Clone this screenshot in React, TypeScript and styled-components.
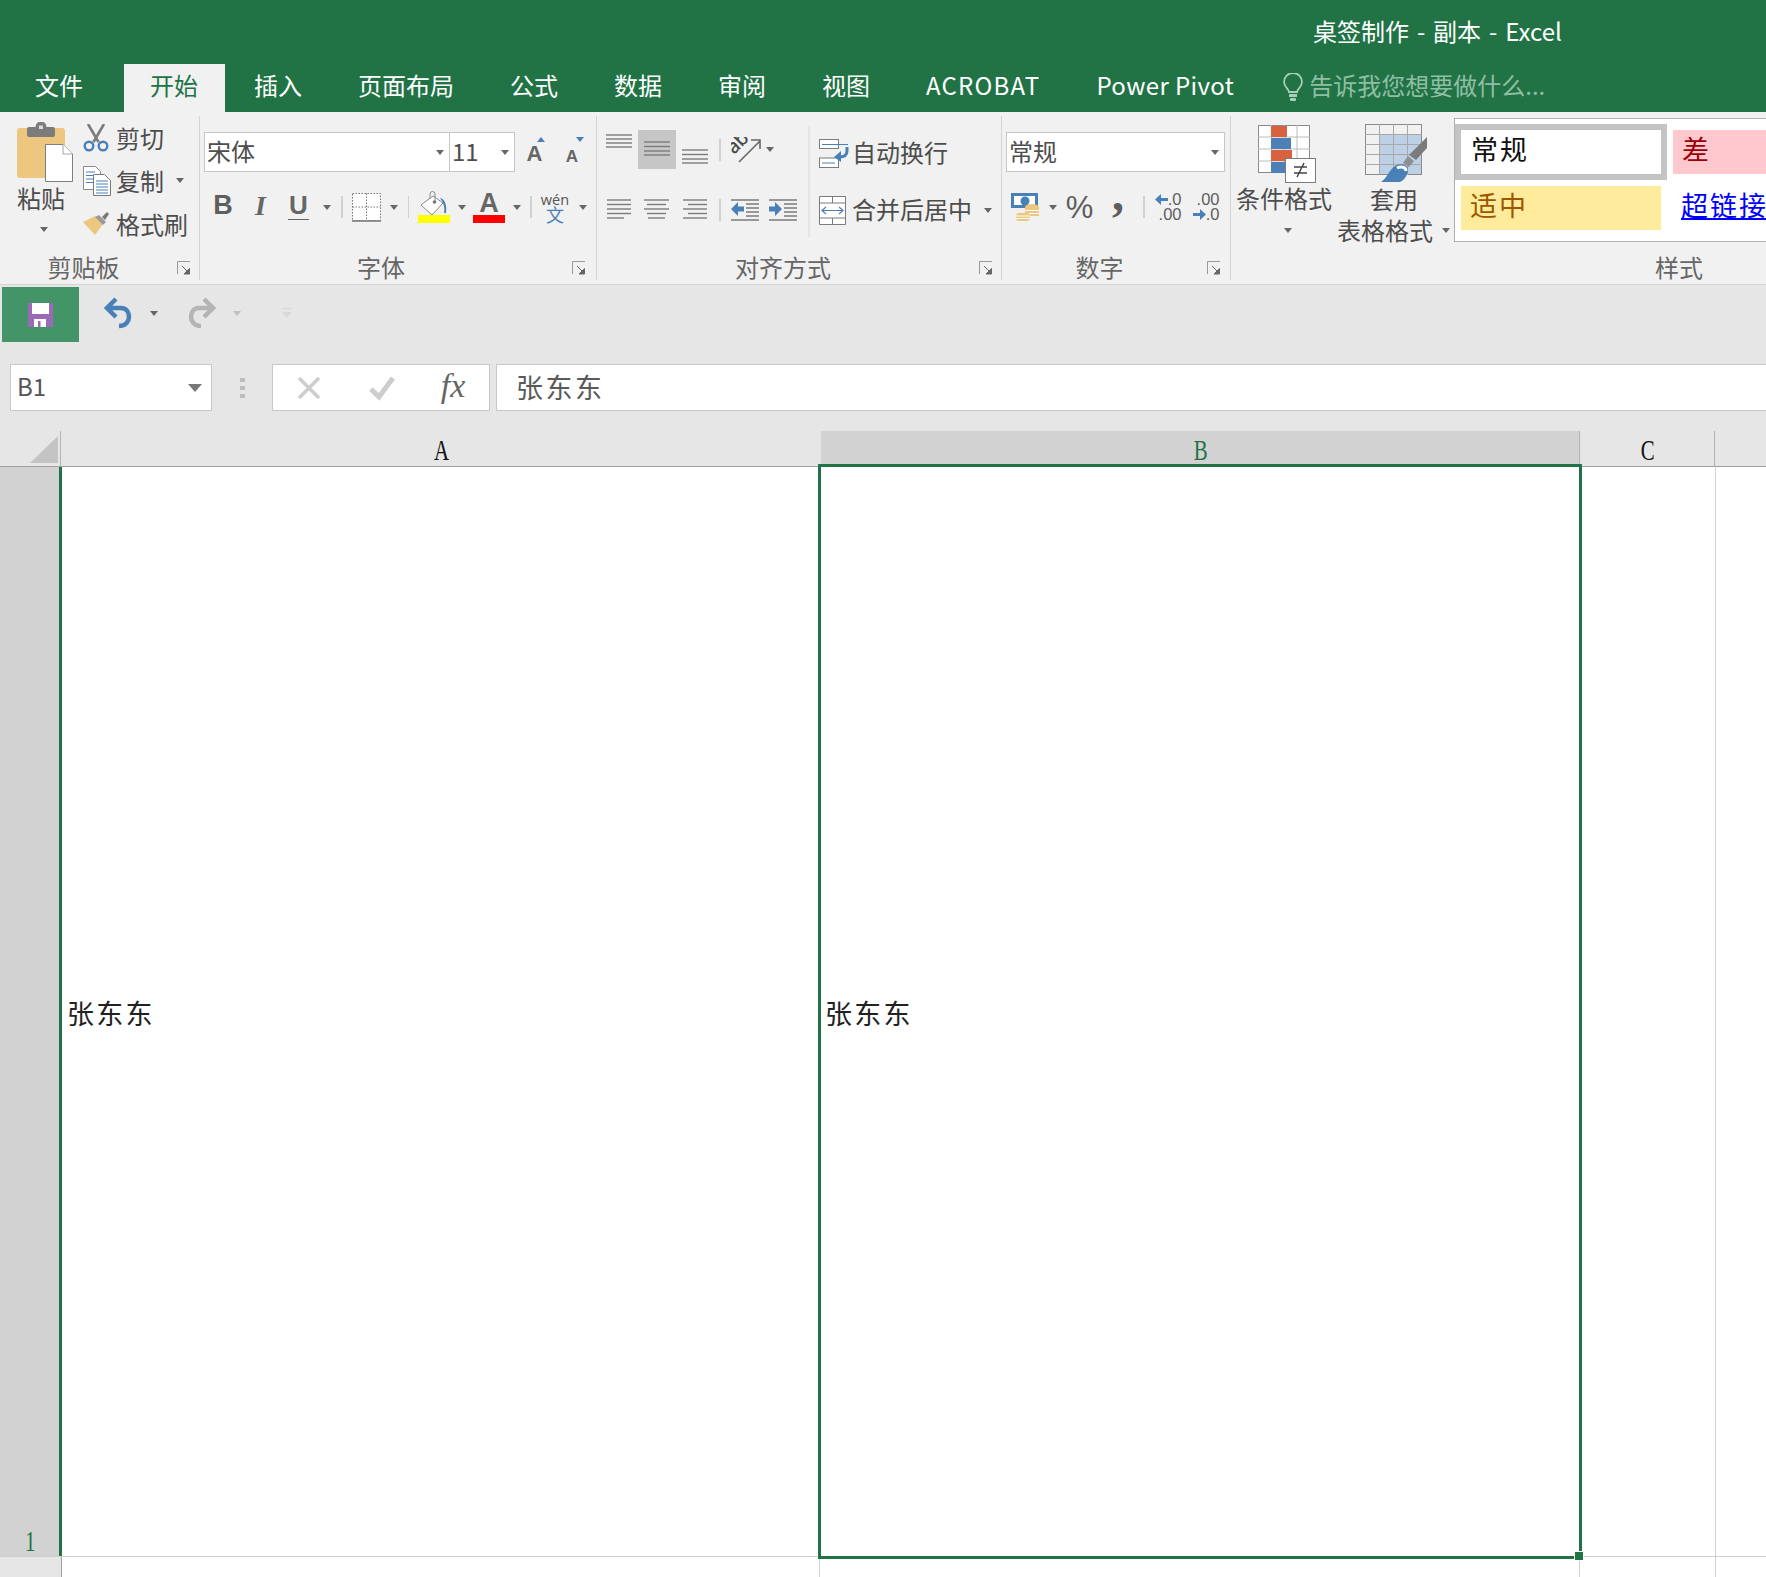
import React from "react";
import styled, { createGlobalStyle } from "styled-components";

const CJK = `"Noto Sans CJK SC", "Noto Sans", sans-serif`;
const GREEN = "#217346";
const GREY = "#7b7b7b";
const BLUE = "#4a80b8";
const GOLD = "#edc77f";

const Global = createGlobalStyle`
  html, body { margin: 0; padding: 0; background: #fff; }
  body { font-family: ${CJK}; }
`;

const Page = styled.div`
  width: 1766px;
  height: 1577px;
  overflow: hidden;
  display: flex;
  flex-direction: column;
  background: #e6e6e6;
  position: relative;
`;

/* ---------- title + tabs ---------- */
const TitleBar = styled.div`
  height: 64px;
  box-sizing: border-box;
  background: ${GREEN};
  color: #fff;
  font-size: 24px;
  line-height: 1;
  display: flex;
  align-items: center;
  padding: 0 0 3px 1313px;
  word-spacing: 2.5px;
  white-space: pre;
`;
const TabRow = styled.div`
  height: 48px;
  background: ${GREEN};
  display: flex;
  gap: 2px;
`;
const Tab = styled.div<{ $active?: boolean; $pl?: number; $pr?: number; $ls?: number }>`
  height: 48px;
  box-sizing: border-box;
  padding: 0 ${(p) => p.$pr ?? 27}px 7px ${(p) => p.$pl ?? 27}px;
  display: flex;
  align-items: center;
  font-size: 24px;
  letter-spacing: ${(p) => p.$ls ?? 0}px;
  white-space: pre;
  color: ${(p) => (p.$active ? GREEN : "#fff")};
  background: ${(p) => (p.$active ? "#f1f1f1" : "transparent")};
`;
const Hint = styled.div`
  display: flex;
  align-items: center;
  gap: 6px;
  margin-left: 20px;
  font-size: 24px;
  color: #8fbfa3;
  white-space: pre;
  padding-bottom: 2px;
`;
const HintText = styled.span`
  padding-bottom: 5px;
`;

/* ---------- ribbon ---------- */
const Ribbon = styled.div`
  height: 173px;
  box-sizing: border-box;
  background: #f1f1f1;
  border-bottom: 1px solid #d4d4d4;
  padding-top: 4px;
  display: flex;
  flex: none;
`;
const Group = styled.div<{ $w: number; $flat?: boolean }>`
  width: ${(p) => p.$w}px;
  flex: none;
  height: 164px;
  box-sizing: border-box;
  border-right: ${(p) => (p.$flat ? "none" : "1.5px solid #d4d4d4")};
  display: flex;
  flex-direction: column;
`;
const Content = styled.div<{ $col?: boolean; $pl?: number }>`
  height: 140px;
  flex: none;
  display: flex;
  flex-direction: ${(p) => (p.$col ? "column" : "row")};
  padding-left: ${(p) => p.$pl ?? 0}px;
`;
const LabelRow = styled.div<{ $pr?: number }>`
  height: 24px;
  display: flex;
  align-items: center;
  padding-right: ${(p) => p.$pr ?? 8}px;
`;
const Label = styled.div<{ $pr?: number }>`
  flex: 1;
  text-align: center;
  font-size: 24px;
  line-height: 24px;
  color: #666;
  box-sizing: border-box;
  padding: 0 ${(p) => p.$pr ?? 10}px 3px 0;
`;
const Launcher = () => (
  <svg width="14" height="14" viewBox="0 0 14 14">
    <path d="M.5 13V.5H13" fill="none" stroke="#9a9a9a" />
    <path d="M5 5l6 6M12.5 7.5v5.5H7z" stroke="#666" fill="#666" strokeWidth="1" />
  </svg>
);
const Caret = styled.span<{ $c?: string; $up?: boolean }>`
  display: block;
  width: 0;
  height: 0;
  border-left: 4.5px solid transparent;
  border-right: 4.5px solid transparent;
  ${(p) =>
    p.$up
      ? `border-bottom: 5px solid ${p.$c ?? "#666"};`
      : `border-top: 5px solid ${p.$c ?? "#666"};`}
`;
const Tool = styled.div<{ $w: number; $ml?: number; $on?: boolean }>`
  width: ${(p) => p.$w}px;
  margin-left: ${(p) => p.$ml ?? 0}px;
  flex: none;
  height: 100%;
  display: flex;
  flex-direction: column;
  align-items: center;
  justify-content: center;
  background: ${(p) => (p.$on ? "#c6c6c6" : "transparent")};
`;
const Sep = styled.div<{ $h: number; $ml: number }>`
  width: 1.5px;
  height: ${(p) => p.$h}px;
  margin-left: ${(p) => p.$ml}px;
  background: #d0d0d0;
  flex: none;
  align-self: center;
`;
const Row = styled.div<{ $h: number; $mt: number }>`
  height: ${(p) => p.$h}px;
  margin-top: ${(p) => p.$mt}px;
  display: flex;
  align-items: center;
  flex: none;
`;
const LeftBlock = styled.div`
  width: 211px;
  flex: none;
`;
const Text = styled.span<{ $ml?: number }>`
  font-size: 24px;
  line-height: 24px;
  color: #4d4d4d;
  white-space: pre;
  margin-left: ${(p) => p.$ml ?? 0}px;
`;
const LiftText = styled(Text)`
  padding-bottom: 4px;
`;
const Combo = styled.div<{ $w: number; $ml?: number }>`
  width: ${(p) => p.$w}px;
  height: 40px;
  margin-left: ${(p) => p.$ml ?? 0}px;
  box-sizing: border-box;
  background: #fff;
  border: 1.5px solid #c6c6c6;
  display: flex;
  align-items: center;
  justify-content: space-between;
  padding: 0 5px 0 2px;
  font-size: 24px;
  color: #4d4d4d;
  flex: none;
`;
const ComboText = styled.span`
  padding-bottom: 4px;
`;

/* clipboard */
const PasteCol = styled.div`
  width: 56px;
  flex: none;
  padding-top: 6px;
  display: flex;
  flex-direction: column;
`;
const PasteText = styled(Text)`
  margin-top: 4px;
`;
const PasteCaret = styled.div`
  margin: 17px 0 0 23px;
`;
const ClipCol = styled.div`
  margin-left: 10px;
  padding-top: 2px;
  display: flex;
  flex-direction: column;
`;
const ClipRow = styled.div`
  height: 43px;
  box-sizing: border-box;
  padding-bottom: 4px;
  display: flex;
  align-items: center;
`;
const ClipIcon = styled.div`
  width: 33px;
  flex: none;
  display: flex;
`;

/* glyph-like tool text */
const Bold = styled.span`
  font: bold 27px/1 "Liberation Sans", sans-serif;
  color: #5e5e5e;
  padding-bottom: 3px;
`;
const Ital = styled.span`
  font: italic bold 28px/1 "Liberation Serif", serif;
  color: #666;
  padding-bottom: 3px;
`;
const Under = styled.span`
  font: bold 26px/1 "Liberation Sans", sans-serif;
  color: #666;
  border-bottom: 1.5px solid #666;
  padding: 0 1px 1px;
  margin-bottom: 3px;
`;
const BigA = styled.span<{ $s: number }>`
  font: bold ${(p) => p.$s}px/${(p) => Math.min(p.$s, 24)}px "Liberation Sans", sans-serif;
  color: #666;
`;
const StepBtn = styled.div<{ $pb: number }>`
  display: flex;
  align-items: flex-end;
  height: 32px;
  box-sizing: border-box;
  padding-bottom: ${(p) => p.$pb}px;
`;
const StepCaret = styled.div<{ $ml: number }>`
  align-self: flex-start;
  margin: 1px 0 0 ${(p) => p.$ml}px;
`;
const ColorBar = styled.div<{ $c: string }>`
  width: 32px;
  height: 8px;
  background: ${(p) => p.$c};
  flex: none;
`;
const WenTop = styled.span`
  font: 14.5px/9px "Open Sans", sans-serif;
  color: #555;
  padding-top: 3px;
`;
const WenBottom = styled.span`
  font: 18px/18px ${CJK};
  color: ${BLUE};
  margin-top: 1px;
`;
const Pct = styled.span`
  font: 31px/1 "Liberation Sans", sans-serif;
  color: #5e5e5e;
`;
const Comma = styled.span`
  font: bold 48px/46px "Liberation Serif", serif;
  color: #5e5e5e;
  height: 46px;
  margin-top: -27px;
`;
const DecBox = styled.div`
  width: 28px;
  display: flex;
  flex-direction: column;
  align-items: flex-end;
  font: 16.5px/15px "Liberation Sans", sans-serif;
  color: #5e5e5e;
`;
const DecLine = styled.div`
  display: flex;
  align-items: center;
  gap: 0;
  white-space: pre;
`;

/* styles */
const BigCol = styled.div<{ $w: number; $ml: number }>`
  width: ${(p) => p.$w}px;
  margin-left: ${(p) => p.$ml}px;
  flex: none;
  display: flex;
  flex-direction: column;
`;
const BigIcon = styled.div<{ $ml: number; $mt: number }>`
  margin: ${(p) => p.$mt}px 0 0 ${(p) => p.$ml}px;
  height: 58px;
  display: flex;
`;
const BigLine = styled.div<{ $ml?: number; $mt: number }>`
  margin: ${(p) => p.$mt}px 0 0 ${(p) => p.$ml ?? 0}px;
  display: flex;
  align-items: center;
  height: 24px;
`;
const Gallery = styled.div`
  margin: 2px 0 0 4px;
  height: 124px;
  width: 600px;
  box-sizing: border-box;
  background: #fff;
  border: 1px solid #b0b0b0;
  padding-top: 5px;
  display: grid;
  grid-template-columns: 212px 212px;
  grid-template-rows: 56px 56px;
`;
const StyleCell = styled.div<{ $bg?: string; $c: string; $active?: boolean; $pl: number }>`
  box-sizing: border-box;
  margin: ${(p) => (p.$active ? "0" : "6px")};
  ${(p) => (p.$active ? "border: 6px solid #c4c4c4;" : "")}
  background: ${(p) => p.$bg ?? "#fff"};
  color: ${(p) => p.$c};
  padding-left: ${(p) => p.$pl}px;
  padding-bottom: 7px;
  display: flex;
  align-items: center;
  font-size: 27px;
  letter-spacing: 2px;
  white-space: pre;
`;
const LinkText = styled.span`
  text-decoration: underline;
`;

/* ---------- quick access ---------- */
const QuickBar = styled.div`
  height: 79px;
  flex: none;
  box-sizing: border-box;
  padding-top: 2px;
  display: flex;
  align-items: flex-start;
`;
const SaveBtn = styled.div`
  width: 77px;
  height: 55px;
  margin-left: 2px;
  background: #439467;
  display: flex;
  align-items: center;
  justify-content: center;
  flex: none;
`;
const QuickTool = styled.div<{ $ml: number }>`
  height: 52px;
  margin-left: ${(p) => p.$ml}px;
  display: flex;
  align-items: center;
`;
const MirrorBox = styled.div`
  display: flex;
  transform: scaleX(-1);
`;

/* ---------- formula bar ---------- */
const FormulaBar = styled.div`
  height: 47px;
  flex: none;
  display: flex;
  padding-left: 10px;
`;
const FBox = styled.div<{ $w?: number; $ml?: number }>`
  ${(p) => (p.$w ? `width: ${p.$w}px; flex: none;` : "flex: 1; margin-right: -6px;")}
  margin-left: ${(p) => p.$ml ?? 0}px;
  box-sizing: border-box;
  background: #fff;
  border: 1.5px solid #c8c8c8;
  display: flex;
  align-items: center;
  color: #555;
  font-size: 24px;
`;
const NameText = styled.span`
  margin-left: 6px;
  flex: 1;
  padding-bottom: 4px;
`;
const NameCaret = styled.span`
  width: 0;
  height: 0;
  border-left: 7px solid transparent;
  border-right: 7px solid transparent;
  border-top: 8px solid #777;
  margin-right: 9px;
`;
const Dots = styled.div`
  width: 5px;
  margin-left: 28px;
  display: flex;
  flex-direction: column;
  justify-content: center;
  gap: 4px;
  flex: none;
`;
const Dot = styled.span`
  width: 5px;
  height: 4px;
  background: #bdbdbd;
`;
const FxSlot = styled.div<{ $w: number; $ml: number }>`
  width: ${(p) => p.$w}px;
  margin-left: ${(p) => p.$ml}px;
  display: flex;
  justify-content: center;
  flex: none;
`;
const Fx = styled.span`
  font: italic 34px/1 "Liberation Serif", serif;
  color: #666;
  padding-bottom: 4px;
`;
const FormulaText = styled.span`
  margin-left: 19px;
  font-size: 27px;
  letter-spacing: 2.5px;
  color: #5a5a5a;
  padding-bottom: 3px;
`;

/* ---------- sheet ---------- */
const HeaderRow = styled.div`
  margin-top: 20px;
  height: 36px;
  flex: none;
  box-sizing: border-box;
  border-bottom: 1.5px solid #a0a0a0;
  display: flex;
`;
const Corner = styled.div`
  width: 61px;
  flex: none;
  box-sizing: border-box;
  border-right: 1px solid #b4b4b4;
  display: flex;
  align-items: flex-end;
  justify-content: flex-end;
  padding: 0 2px 3px 0;
`;
const ColHead = styled.div<{ $w: number; $on?: boolean; $line?: boolean }>`
  width: ${(p) => p.$w}px;
  flex: none;
  box-sizing: border-box;
  background: ${(p) => (p.$on ? "#d2d2d2" : "transparent")};
  color: ${(p) => (p.$on ? GREEN : "#111")};
  border-right: 1px solid ${(p) => (p.$line ? "#b4b4b4" : "transparent")};
  display: flex;
  justify-content: center;
  align-items: center;
`;
const HeadLetter = styled.span`
  font: 29px/1 "Liberation Serif", serif;
  display: inline-block;
  transform: scaleX(0.72);
  margin: 3px 0 0 1px;
`;
const SheetRow = styled.div<{ $h: number }>`
  display: flex;
  background: #fff;
  flex: none;
  height: ${(p) => p.$h}px;
  position: relative;
  z-index: 1;
`;
const RowHead = styled.div`
  width: 62px;
  flex: none;
  box-sizing: border-box;
  background: #d2d2d2;
  border-right: 3px solid ${GREEN};
  color: ${GREEN};
  display: flex;
  align-items: flex-end;
  justify-content: center;
`;
const RowHead2 = styled.div`
  width: 62px;
  flex: none;
  box-sizing: border-box;
  background: #e6e6e6;
  border-right: 1.5px solid #a0a0a0;
`;
const Cell = styled.div<{ $w: number; $line?: boolean }>`
  width: ${(p) => p.$w}px;
  flex: none;
  box-sizing: border-box;
  border-right: 1px solid ${(p) => (p.$line ? "#d4d4d4" : "transparent")};
  padding: 1px 0 0 5px;
  display: flex;
  align-items: center;
  font-size: 27px;
  letter-spacing: 2.2px;
  color: #222;
`;
const Selection = styled.div`
  position: absolute;
  left: 818px;
  top: -3px;
  width: 764px;
  height: 1095px;
  box-sizing: border-box;
  border: 3px solid ${GREEN};
  pointer-events: none;
`;
const Handle = styled.div`
  position: absolute;
  right: -4px;
  bottom: -4px;
  width: 8px;
  height: 8px;
  background: ${GREEN};
  box-shadow: 0 0 0 1px #fff;
`;
const Row2 = styled.div`
  display: flex;
  background: #fff;
  border-top: 1px solid #d0d0d0;
  flex: 1;
`;
const Cell2 = styled.div<{ $w: number }>`
  width: ${(p) => p.$w}px;
  flex: none;
  box-sizing: border-box;
  border-right: 1.5px solid #d0d0d0;
`;
const BigSep = styled.div`
  width: 2px;
  height: 110px;
  margin: 11px 0 0 0;
  background: #e4e4e4;
  flex: none;
`;

/* ---------- icons ---------- */
const PasteIcon = () => (
  <svg width="56" height="60" viewBox="0 0 56 60">
    <rect x="0" y="6" width="48" height="50" rx="3" fill={GOLD} />
    <rect x="10" y="5" width="28" height="10" rx="2" fill="#7c7c7c" />
    <circle cx="24" cy="5" r="5.500" fill="#7c7c7c" />
    <rect x="22" y="3.500" width="4" height="3.500" fill="#dcdcdc" />
    <path d="M28.500 22.500H46l9.500 9.500v27.500h-27z" fill="#fff" stroke="#7f7f7f" />
    <path d="M46 22.500V32h9.500" fill="#fff" stroke="#a5a5a5" />
  </svg>
);
const ScissorsIcon = () => (
  <svg width="26" height="28" viewBox="0 0 26 28">
    <path d="M5 0l10.500 18M21 0L10.500 18" stroke="#7b7b7b" strokeWidth="2.600" fill="none" />
    <circle cx="6" cy="22" r="4.300" fill="none" stroke={BLUE} strokeWidth="2.400" />
    <circle cx="20" cy="22" r="4.300" fill="none" stroke={BLUE} strokeWidth="2.400" />
  </svg>
);
const CopyIcon = () => (
  <svg width="28" height="30" viewBox="0 0 28 30">
    <path d="M.5.500h12l5 5v18H.5z" fill="#fff" stroke="#8a8a8a" />
    <path d="M3 6h9M3 9.500h11M3 13h11M3 16.500h9" stroke={BLUE} />
    <path d="M10.500 8.500h11l6 6v15h-17z" fill="#fff" stroke="#7a7a7a" />
    <path d="M13 15h12M13 18h12M13 21h12M13 24h12M13 27h12" stroke={BLUE} />
  </svg>
);
const BrushIcon = () => (
  <svg width="26" height="23" viewBox="0 0 26 23">
    <path d="M0 10l12-6 8 8-8 11z" fill={GOLD} />
    <path d="M12 5l4-2 7 7-3 3z" fill="#9a9a9a" />
    <path d="M19 5l5-5 2 2-4 6z" fill="#777" />
  </svg>
);
const BordersIcon = () => (
  <svg width="29" height="29" viewBox="0 0 29 29">
    <path d="M.5.500h28v27H.5zM14.500.500v27M.5 14h28" fill="#fff" stroke="#777" strokeDasharray="1.500 1.500" />
    <path d="M0 28h29" stroke="#777" strokeWidth="1.500" />
  </svg>
);
const BucketIcon = () => (
  <svg width="32" height="24" viewBox="0 0 32 24">
    <path d="M15 5L3 14l11 10 11-12z" fill="#fff" stroke="#8a8a8a" />
    <path d="M12 8V3a2.500 2.500 0 0 1 5 0v8" fill="none" stroke="#8a8a8a" />
    <circle cx="16.500" cy="11" r="1.800" fill="#777" />
    <path d="M22 7c5 1 7 7 6 15h-2c1-5 0-10-4-15z" fill={BLUE} />
  </svg>
);
const Align = ({ w, h, ys, xs }: { w: number; h: number; ys: number[]; xs: number[][] }) => (
  <svg width={w} height={h} viewBox={`0 0 ${w} ${h}`}>
    {ys.map((y, i) => (
      <path key={y} d={`M${xs[i % xs.length][0]} ${y}H${xs[i % xs.length][1]}`} stroke={GREY} strokeWidth="1.400" />
    ))}
  </svg>
);
const RotateIcon = () => (
  <svg width="30" height="26" viewBox="0 0 30 26">
    <text fontFamily="'Open Sans', sans-serif" fontSize="19" fill="#444" stroke="#444" strokeWidth=".4" transform="translate(3 15) rotate(-45) translate(-2 2)">ab</text>
    <path d="M8 25L29 4M20 3h9v9" fill="none" stroke="#666" strokeWidth="1.600" />
  </svg>
);
const Indent = ({ inc }: { inc?: boolean }) => (
  <svg width="28" height="22" viewBox="0 0 28 22">
    <path d={inc ? "M0 7.500h6V3l7 7-7 7v-4.500H0z" : "M13 7.500H7V3L0 10l7 7v-4.500h6z"} fill={BLUE} />
    <path d="M0 1h28M15 5h13M15 9h13M15 13h13M15 17h13M0 21h28" stroke={GREY} strokeWidth="1.300" />
  </svg>
);
const WrapIcon = () => (
  <svg width="30" height="29" viewBox="0 0 30 29">
    <rect x=".5" y=".5" width="19" height="9" fill="#fff" stroke="#7b7b7b" />
    <rect x=".5" y="19" width="19" height="9.500" fill="#fff" stroke="#7b7b7b" />
    <path d="M3 5.500h26M3 24h13" stroke={BLUE} />
    <path d="M28 8v4c0 4-3 6-8 6" fill="none" stroke={BLUE} strokeWidth="3" />
    <path d="M22 12l-7 6 7 5z" fill={BLUE} />
  </svg>
);
const MergeIcon = () => (
  <svg width="28" height="29" viewBox="0 0 28 29">
    <path d="M.5.500h26v28H.5zM.5 7h26M.5 22h26M13.500.500V7M13.500 22v6.500" fill="#fff" stroke="#7b7b7b" />
    <path d="M3 14.500h21M7 11l-4 3.500L7 18M20 11l4 3.500-4 3.500" fill="none" stroke={BLUE} strokeWidth="1.200" />
  </svg>
);
const MoneyIcon = () => (
  <svg width="28" height="28" viewBox="0 0 28 28">
    <rect x="0" y="0" width="27" height="15" fill={BLUE} />
    <rect x="3" y="3" width="21" height="9" fill="#fff" />
    <circle cx="14" cy="8" r="4.500" fill={BLUE} />
    <ellipse cx="21" cy="14" rx="7" ry="3" fill={GOLD} />
    <rect x="14" y="14" width="14" height="9" fill={GOLD} />
    <path d="M14 17.500h14M14 20.500h14" stroke="#fff" />
    <rect x="5" y="20" width="14" height="8" rx="3" fill={GOLD} />
    <path d="M5 23h14M5 25.500h14" stroke="#fff" />
  </svg>
);
const ArrowL = () => (
  <svg width="13" height="13" viewBox="0 0 13 13">
    <path d="M13 5H6V1L0 6.500 6 12V8h7z" fill={BLUE} />
  </svg>
);
const ArrowR = () => (
  <svg width="13" height="13" viewBox="0 0 13 13">
    <path d="M0 5h7V1l6 5.500L7 12V8H0z" fill={BLUE} />
  </svg>
);
const CondIcon = () => (
  <svg width="58" height="58" viewBox="0 0 58 58">
    <rect x=".5" y=".5" width="51" height="47" fill="#fff" stroke="#8a8a8a" />
    <path d="M13.500 0v48M26.500 0v48M39 0v48M0 12h52M0 24h52M0 36h52" stroke="#bcbcbc" />
    <rect x="13" y="1" width="16" height="11" fill="#d8623f" />
    <rect x="13" y="13" width="20" height="11" fill="#4e80b8" />
    <rect x="13" y="25" width="21" height="11" fill="#d8623f" />
    <rect x="13" y="37" width="15" height="11" fill="#4e80b8" />
    <rect x="27.500" y="33.500" width="30" height="24" fill="#fff" stroke="#7b7b7b" />
    <path d="M36 42h13M36 48h13M46 38l-7 14" stroke="#444" strokeWidth="1.500" fill="none" />
  </svg>
);
const TableIcon = () => (
  <svg width="62" height="58" viewBox="0 0 62 58">
    <rect x="14" y="10" width="43" height="40" fill="#bdd1e6" />
    <rect x=".5" y=".5" width="56" height="50" fill="none" stroke="#8a8a8a" />
    <path d="M14.500 0v51M28.500 0v51M42.500 0v51M0 10.500h57M0 20.500h57M0 30.500h57M0 40.500h57" stroke="#a8a8a8" />
    <path d="M62 13v11L51 36l-7-5z" fill="#7b7b7b" />
    <path d="M43 32l6 5-5 6-6-4z" fill="#8f8f8f" />
    <path d="M16 58c6-4 8-12 14-16 6-4 14-1 13 5-1 5-5 11-9 11z" fill={BLUE} />
    <path d="M32 44c4-2 9-1 9 3" fill="none" stroke="#fff" strokeWidth="3" />
  </svg>
);
const BulbIcon = () => (
  <svg width="20" height="28" viewBox="0 0 20 28">
    <path d="M6 19c0-3-5-5-5-10a9 9 0 0 1 18 0c0 5-5 7-5 10z" fill="none" stroke="#a9cfb9" strokeWidth="1.800" />
    <rect x="6" y="21" width="8" height="3" fill="#a9cfb9" />
    <rect x="7" y="25" width="6" height="3" rx="1" fill="#a9cfb9" />
  </svg>
);
const SaveIcon = () => (
  <svg width="25" height="24" viewBox="0 0 25 24">
    <path d="M0 0h25v24H0z" fill="#9a69b8" />
    <rect x="4" y="0" width="17" height="11" fill="#fff" />
    <rect x="6" y="16" width="12" height="8" fill="#fff" />
    <rect x="10" y="18" width="2.500" height="6" fill="#9a69b8" />
  </svg>
);
const UndoIcon = ({ c }: { c: string }) => (
  <svg width="28" height="32" viewBox="0 0 28 32">
    <path d="M3 11h14c6 0 8 5 8 9s-3 9-10 9" fill="none" stroke={c} strokeWidth="4.500" />
    <path d="M12 2L3 11l9 9" fill="none" stroke={c} strokeWidth="4.500" />
  </svg>
);
const CrossIcon = () => (
  <svg width="24" height="24" viewBox="0 0 24 24">
    <path d="M2 2l20 20M22 2L2 22" stroke="#cdcdcd" strokeWidth="3.500" />
  </svg>
);
const CheckIcon = () => (
  <svg width="26" height="26" viewBox="0 0 26 26">
    <path d="M2 14l8 8L24 3" fill="none" stroke="#cdcdcd" strokeWidth="5" />
  </svg>
);
const CornerTriangle = () => (
  <svg width="28" height="27" viewBox="0 0 28 27">
    <path d="M28 0v27H0z" fill="#c4c4c4" />
  </svg>
);
const QuickMore = () => (
  <svg width="12" height="12" viewBox="0 0 12 12">
    <path d="M1 1.500h10" stroke="#d8d8d8" strokeWidth="1.500" />
    <path d="M1 5h10l-5 6z" fill="#d8d8d8" />
  </svg>
);

const TopX = [[0, 26]];
const tabs: [string, number?][] = [
  ["插入"],
  ["页面布局"],
  ["公式"],
  ["数据"],
  ["审阅"],
  ["视图"],
  ["ACROBAT", 1.2],
  ["Power Pivot", 0.4],
];

export default function App() {
  return (
    <Page>
      <Global />
      <TitleBar>桌签制作 - 副本 - Excel</TitleBar>
      <TabRow>
        <Tab $pl={35} $pr={39}>文件</Tab>
        <Tab $active $pl={26} $pr={27}>开始</Tab>
        {tabs.map(([t, ls]) => (
          <Tab key={t} $ls={ls}>{t}</Tab>
        ))}
        <Hint>
          <BulbIcon />
          <HintText>告诉我您想要做什么...</HintText>
        </Hint>
      </TabRow>

      <Ribbon>
        {/* clipboard */}
        <Group $w={200}>
          <Content $pl={17}>
            <PasteCol>
              <PasteIcon />
              <PasteText>粘贴</PasteText>
              <PasteCaret><Caret /></PasteCaret>
            </PasteCol>
            <ClipCol>
              <ClipRow>
                <ClipIcon><ScissorsIcon /></ClipIcon>
                <Text>剪切</Text>
              </ClipRow>
              <ClipRow>
                <ClipIcon><CopyIcon /></ClipIcon>
                <Text>复制</Text>
                <Tool $w={9} $ml={11}><Caret /></Tool>
              </ClipRow>
              <ClipRow>
                <ClipIcon><BrushIcon /></ClipIcon>
                <Text>格式刷</Text>
              </ClipRow>
            </ClipCol>
          </Content>
          <LabelRow $pr={8}>
            <Label>剪贴板</Label>
            <Launcher />
          </LabelRow>
        </Group>

        {/* font */}
        <Group $w={397}>
          <Content $col $pl={4}>
            <Row $h={40} $mt={16}>
              <Combo $w={246}><ComboText>宋体</ComboText><Caret /></Combo>
              <Combo $w={66} $ml={-1}><ComboText>11</ComboText><Caret /></Combo>
              <Tool $w={20} $ml={11}>
                <StepBtn $pb={3}>
                  <BigA $s={22}>A</BigA>
                  <StepCaret $ml={-5}><Caret $up $c={BLUE} /></StepCaret>
                </StepBtn>
              </Tool>
              <Tool $w={18} $ml={20}>
                <StepBtn $pb={3}>
                  <BigA $s={17}>A</BigA>
                  <StepCaret $ml={-2}><Caret $c={BLUE} /></StepCaret>
                </StepBtn>
              </Tool>
            </Row>
            <Row $h={32} $mt={19}>
              <Tool $w={16} $ml={11}><Bold>B</Bold></Tool>
              <Tool $w={15} $ml={22}><Ital>I</Ital></Tool>
              <Tool $w={19} $ml={21}><Under>U</Under></Tool>
              <Tool $w={9} $ml={14}><Caret /></Tool>
              <Sep $h={22} $ml={10} />
              <Tool $w={29} $ml={9}><BordersIcon /></Tool>
              <Tool $w={9} $ml={9}><Caret /></Tool>
              <Sep $h={22} $ml={9} />
              <Tool $w={32} $ml={9}>
                <BucketIcon />
                <ColorBar $c="#ffff00" />
              </Tool>
              <Tool $w={9} $ml={7}><Caret /></Tool>
              <Tool $w={32} $ml={7}>
                <BigA $s={27}>A</BigA>
                <ColorBar $c="#ff0000" />
              </Tool>
              <Tool $w={9} $ml={7}><Caret /></Tool>
              <Sep $h={22} $ml={9} />
              <Tool $w={25} $ml={11}>
                <WenTop>wén</WenTop>
                <WenBottom>文</WenBottom>
              </Tool>
              <Tool $w={9} $ml={11}><Caret /></Tool>
            </Row>
          </Content>
          <LabelRow $pr={10}>
            <Label>字体</Label>
            <Launcher />
          </LabelRow>
        </Group>

        {/* alignment */}
        <Group $w={405}>
          <Content>
            <LeftBlock>
              <Row $h={39} $mt={14}>
                <Tool $w={26} $ml={9}><Align w={26} h={39} ys={[5, 9, 13, 17]} xs={TopX} /></Tool>
                <Tool $w={38} $ml={6} $on><Align w={26} h={39} ys={[12, 16.5, 21, 25]} xs={TopX} /></Tool>
                <Tool $w={26} $ml={6}><Align w={26} h={39} ys={[20, 24.5, 29, 33]} xs={TopX} /></Tool>
                <Sep $h={22} $ml={11} />
                <Tool $w={30} $ml={10}><RotateIcon /></Tool>
                <Tool $w={9} $ml={5}><Caret /></Tool>
              </Row>
              <Row $h={25} $mt={28}>
                <Tool $w={24} $ml={10}><Align w={24} h={22} ys={[1, 5.5, 10, 14.5, 19]} xs={[[0, 24], [0, 24], [0, 24], [0, 24], [0, 17]]} /></Tool>
                <Tool $w={25} $ml={13}><Align w={25} h={22} ys={[1, 5.5, 10, 14.5, 19]} xs={[[0, 25], [3, 22], [0, 25], [3, 22], [4, 21]]} /></Tool>
                <Tool $w={24} $ml={14}><Align w={24} h={22} ys={[1, 5.5, 10, 14.5, 19]} xs={[[0, 24], [5, 24], [0, 24], [5, 24], [0, 24]]} /></Tool>
                <Sep $h={22} $ml={12} />
                <Tool $w={28} $ml={10}><Indent /></Tool>
                <Tool $w={28} $ml={10}><Indent inc /></Tool>
              </Row>
            </LeftBlock>
            <BigSep />
            <div>
              <Row $h={29} $mt={23}>
                <Tool $w={30} $ml={9}><WrapIcon /></Tool>
                <LiftText $ml={3}>自动换行</LiftText>
              </Row>
              <Row $h={29} $mt={28}>
                <Tool $w={28} $ml={9}><MergeIcon /></Tool>
                <LiftText $ml={5}>合并后居中</LiftText>
                <Tool $w={9} $ml={11}><Caret /></Tool>
              </Row>
            </div>
          </Content>
          <LabelRow $pr={8}>
            <Label>对齐方式</Label>
            <Launcher />
          </LabelRow>
        </Group>

        {/* number */}
        <Group $w={229}>
          <Content $col>
            <Row $h={40} $mt={16}>
              <Combo $w={219} $ml={4}><ComboText>常规</ComboText><Caret /></Combo>
            </Row>
            <Row $h={28} $mt={21}>
              <Tool $w={28} $ml={9}><MoneyIcon /></Tool>
              <Tool $w={9} $ml={9}><Caret /></Tool>
              <Tool $w={25} $ml={10}><Pct>%</Pct></Tool>
              <Tool $w={12} $ml={20}><Comma>,</Comma></Tool>
              <Sep $h={22} $ml={19} />
              <Tool $w={28} $ml={9}>
                <DecBox>
                  <DecLine><ArrowL />.0</DecLine>
                  <DecLine>.00</DecLine>
                </DecBox>
              </Tool>
              <Tool $w={28} $ml={10}>
                <DecBox>
                  <DecLine>.00</DecLine>
                  <DecLine><ArrowR />.0</DecLine>
                </DecBox>
              </Tool>
            </Row>
          </Content>
          <LabelRow $pr={9}>
            <Label>数字</Label>
            <Launcher />
          </LabelRow>
        </Group>

        {/* styles */}
        <Group $w={896} $flat>
          <Content>
            <BigCol $w={97} $ml={5}>
              <BigIcon $ml={22} $mt={9}><CondIcon /></BigIcon>
              <BigLine $mt={3}><Text>条件格式</Text></BigLine>
              <BigLine $ml={48} $mt={8}><Caret /></BigLine>
            </BigCol>
            <BigCol $w={113} $ml={4}>
              <BigIcon $ml={28} $mt={8}><TableIcon /></BigIcon>
              <BigLine $ml={33} $mt={5}><Text>套用</Text></BigLine>
              <BigLine $mt={7}>
                <Text>表格格式</Text>
                <Tool $w={9} $ml={8}><Caret /></Tool>
              </BigLine>
            </BigCol>
            <Gallery>
              <StyleCell $active $c="#111" $pl={10}>常规</StyleCell>
              <StyleCell $bg="#ffc7ce" $c="#9c0006" $pl={9}>差</StyleCell>
              <StyleCell $bg="#ffeb9c" $c="#9c5700" $pl={9}>适中</StyleCell>
              <StyleCell $c="#0000ff" $pl={8}><LinkText>超链接</LinkText></StyleCell>
            </Gallery>
          </Content>
          <LabelRow $pr={0}>
            <Label $pr={0}>样式</Label>
          </LabelRow>
        </Group>
      </Ribbon>

      <QuickBar>
        <SaveBtn><SaveIcon /></SaveBtn>
        <QuickTool $ml={25}><UndoIcon c={BLUE} /></QuickTool>
        <QuickTool $ml={18}><Caret /></QuickTool>
        <QuickTool $ml={30}>
          <MirrorBox><UndoIcon c="#b4b4b4" /></MirrorBox>
        </QuickTool>
        <QuickTool $ml={17}><Caret $c="#c0c0c0" /></QuickTool>
        <QuickTool $ml={40}><QuickMore /></QuickTool>
      </QuickBar>

      <FormulaBar>
        <FBox $w={202}>
          <NameText>B1</NameText>
          <NameCaret />
        </FBox>
        <Dots>
          <Dot />
          <Dot />
          <Dot />
        </Dots>
        <FBox $w={218} $ml={27}>
          <FxSlot $w={24} $ml={24}><CrossIcon /></FxSlot>
          <FxSlot $w={26} $ml={48}><CheckIcon /></FxSlot>
          <FxSlot $w={30} $ml={43}><Fx>fx</Fx></FxSlot>
        </FBox>
        <FBox $ml={6}>
          <FormulaText>张东东</FormulaText>
        </FBox>
      </FormulaBar>

      <HeaderRow>
        <Corner><CornerTriangle /></Corner>
        <ColHead $w={760}><HeadLetter>A</HeadLetter></ColHead>
        <ColHead $w={759} $on $line><HeadLetter>B</HeadLetter></ColHead>
        <ColHead $w={135} $line><HeadLetter>C</HeadLetter></ColHead>
      </HeaderRow>

      <SheetRow $h={1089}>
        <RowHead><HeadLetter>1</HeadLetter></RowHead>
        <Cell $w={758}>张东东</Cell>
        <Cell $w={760} $line>张东东</Cell>
        <Cell $w={136} $line />
        <Selection><Handle /></Selection>
      </SheetRow>
      <Row2>
        <RowHead2 />
        <Cell2 $w={758} />
        <Cell2 $w={760} />
        <Cell2 $w={136} />
      </Row2>
    </Page>
  );
}
